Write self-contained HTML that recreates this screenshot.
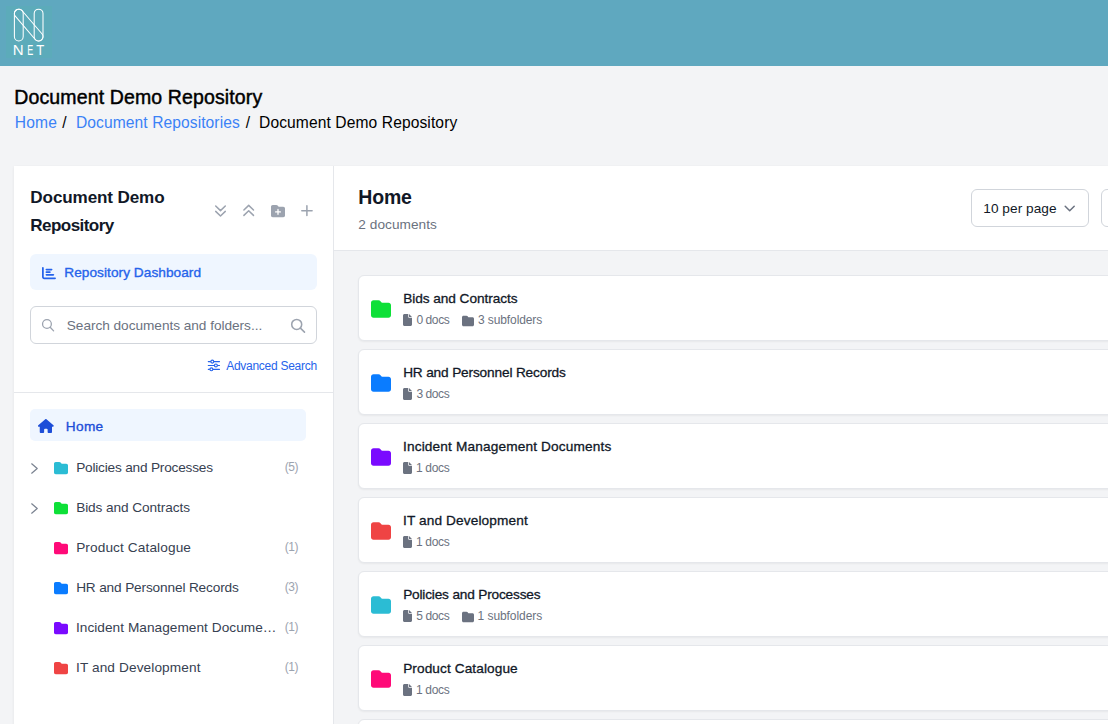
<!DOCTYPE html>
<html lang="en"><head><meta charset="utf-8"><title>Document Demo Repository</title>
<style>
html,body{margin:0;padding:0}
body{width:1108px;height:724px;overflow:hidden;background:#f3f4f6;position:relative;font-family:"Liberation Sans",sans-serif;color:#111827}
.t{position:absolute;white-space:nowrap;display:block;margin:0;font-weight:400}
.ic{position:absolute;display:block;overflow:visible}
.b{position:absolute;box-sizing:border-box}
.card{position:absolute;box-sizing:border-box;left:358px;width:800px;height:66px;background:#fff;border:1px solid #e5e7eb;border-radius:6px;box-shadow:0 1px 2px rgba(0,0,0,.05)}
</style></head><body>

<header>
<div class="b" style="left:0;top:0;width:1108px;height:66px;background:#5fa8bf"></div>
<div class="b" style="left:6px;top:6px;width:46px;height:52px;background:#5cabba"></div>
<svg class="ic" style="left:6px;top:6px" width="45" height="52" viewBox="6 6 45 52">
<g fill="none" stroke="#fff" stroke-width="1.05">
<rect x="14.4" y="9.2" width="8.8" height="31.8" rx="4.4"/>
<rect x="34.2" y="9.2" width="8.8" height="31.8" rx="4.4"/>
<rect x="24.3" y="5.52" width="8.8" height="39.15" rx="4.4" transform="rotate(-40.7 28.7 25.1)"/>
</g>
<g font-family="Liberation Sans, sans-serif" font-size="14.1" fill="#fff" lengthAdjust="spacingAndGlyphs">
<text x="12.77" y="54.6" textLength="10.86" lengthAdjust="spacingAndGlyphs">N</text>
<text x="27.26" y="54.6" textLength="6.03" lengthAdjust="spacingAndGlyphs">E</text>
<text x="36.31" y="54.6" textLength="7.99" lengthAdjust="spacingAndGlyphs">T</text>
</g>
</svg>
</header>
<h1 class="t" id="h1" style="left:14.30px;top:86px;font-size:19.5px;line-height:22px;color:#000;letter-spacing:0.13px;-webkit-text-stroke:0.45px #000;">Document Demo Repository</h1>
<nav aria-label="Breadcrumb">
<span class="t" id="bc1" style="left:14.72px;top:114px;font-size:15.6px;line-height:17px;color:#3b82f6;letter-spacing:0.188px;">Home</span>
<span class="t" id="bc2" style="left:62.28px;top:114px;font-size:15.6px;line-height:17px;color:#000;">/</span>
<span class="t" id="bc3" style="left:76.02px;top:114px;font-size:15.6px;line-height:17px;color:#3b82f6;letter-spacing:0.083px;">Document Repositories</span>
<span class="t" id="bc4" style="left:245.73px;top:114px;font-size:15.6px;line-height:17px;color:#000;">/</span>
<span class="t" id="bc5" style="left:259.02px;top:114px;font-size:15.6px;line-height:17px;color:#000;letter-spacing:0.102px;">Document Demo Repository</span>
</nav>
<!-- main panel -->
<div class="b" style="left:14px;top:166px;width:1100px;height:600px;background:#fff;box-shadow:0 1px 3px rgba(0,0,0,.07)"></div>
<div class="b" style="left:333px;top:166px;width:1px;height:600px;background:#e5e7eb"></div>
<div class="b" style="left:334px;top:250px;width:800px;height:500px;background:#f3f4f6;border-top:1px solid #e5e7eb"></div>
<aside>
<span class="t" id="st1" style="left:30.36px;top:188px;font-size:17.1px;line-height:19px;color:#111827;font-weight:700;letter-spacing:-0.131px;">Document Demo</span>
<span class="t" id="st2" style="left:30.36px;top:216px;font-size:17.1px;line-height:19px;color:#111827;font-weight:700;letter-spacing:-0.596px;">Repository</span>
<svg class="ic" style="left:210px;top:200px" width="110" height="22" viewBox="210 200 110 22">
<g fill="none" stroke="#9ca3af" stroke-width="1.5" stroke-linecap="round" stroke-linejoin="round">
<path d="M215.7 206 L220.5 210.6 L225.3 206 M215.7 211.4 L220.5 216 L225.3 211.4"/>
<path d="M243.9 210 L248.7 205.4 L253.5 210 M243.9 215.4 L248.7 210.8 L253.5 215.4"/>
<path d="M301.8 210.75 H312.1 M306.9 205.8 V215.6"/>
</g></svg>
<svg class="ic" style="left:270.9px;top:203.5px" width="14" height="14" viewBox="0 0 512 512"><path fill="#9ca3af" d="M512 416c0 35.3-28.7 64-64 64H64c-35.3 0-64-28.7-64-64V96C0 60.7 28.7 32 64 32H192c20.1 0 39.1 9.5 51.2 25.6l19.2 25.6c6 8.1 15.5 12.8 25.6 12.8H448c35.3 0 64 28.7 64 64V416zM232 376c0 13.3 10.7 24 24 24s24-10.7 24-24V312h64c13.3 0 24-10.7 24-24s-10.7-24-24-24H280V200c0-13.3-10.7-24-24-24s-24 10.7-24 24v64H168c-13.3 0-24 10.7-24 24s10.7 24 24 24h64v64z"/></svg>
<div class="b" style="left:30px;top:254px;width:287px;height:36px;background:#eff6ff;border-radius:6px"></div>
<svg class="ic" style="left:41.8px;top:265.9px" width="14" height="14" viewBox="0 0 512 512"><path fill="#2563eb" d="M32 32c17.7 0 32 14.3 32 32V400c0 8.8 7.2 16 16 16H480c17.7 0 32 14.3 32 32s-14.3 32-32 32H80c-44.2 0-80-35.8-80-80V64C0 46.3 14.3 32 32 32zm96 96c0-17.7 14.3-32 32-32l192 0c17.7 0 32 14.3 32 32s-14.3 32-32 32l-192 0c-17.7 0-32-14.3-32-32zm32 64H288c17.7 0 32 14.3 32 32s-14.3 32-32 32H160c-17.7 0-32-14.3-32-32s14.3-32 32-32zm0 96H416c17.7 0 32 14.3 32 32s-14.3 32-32 32H160c-17.7 0-32-14.3-32-32s14.3-32 32-32z"/></svg>
<span class="t" id="rd" style="left:64.28px;top:265px;font-size:13.65px;line-height:15px;color:#2563eb;letter-spacing:0.056px;-webkit-text-stroke:0.35px #2563eb;">Repository Dashboard</span>
<div class="b" style="left:30px;top:306px;width:287px;height:38px;background:#fff;border:1px solid #d1d5db;border-radius:6px"></div>
<svg class="ic" style="left:40px;top:317px" width="16" height="16" viewBox="40 317 16 16">
<g fill="none" stroke="#9ca3af" stroke-width="1.3" stroke-linecap="round"><circle cx="46.95" cy="324.05" r="4.4"/><path d="M50.2 327.3 L53.6 330.9"/></g></svg>
<svg class="ic" style="left:289px;top:316px" width="18" height="18" viewBox="289 316 18 18">
<g fill="none" stroke="#9ca3af" stroke-width="1.55" stroke-linecap="round"><circle cx="296.7" cy="324.4" r="5"/><path d="M300.4 328.1 L304.5 332.1"/></g></svg>
<span class="t" id="ph" style="left:66.78px;top:318px;font-size:13.65px;line-height:15px;color:#6b7280;letter-spacing:-0.032px;">Search documents and folders...</span>
<svg class="ic" style="left:206px;top:358px" width="16" height="16" viewBox="206 358 16 16">
<g fill="none" stroke="#2563eb" stroke-width="1.15" stroke-linecap="round">
<path d="M208.3 361.6 H219.5 M208.3 365.45 H219.5 M208.3 369.3 H219.5"/>
<circle cx="212.3" cy="361.6" r="1.45" fill="#fff"/><circle cx="215.9" cy="365.45" r="1.45" fill="#fff"/><circle cx="211.4" cy="369.3" r="1.45" fill="#fff"/>
</g></svg>
<span class="t" id="as" style="left:226.23px;top:359px;font-size:12.0px;line-height:14px;color:#2563eb;letter-spacing:-0.277px;">Advanced Search</span>
<div class="b" style="left:14px;top:392px;width:319px;height:1px;background:#e5e7eb"></div>
<!-- folder tree -->
<div class="b" style="left:30px;top:409px;width:276px;height:32px;background:#eff6ff;border-radius:5px"></div>
<svg class="ic" style="left:37.8px;top:418.7px" width="15.75" height="14" viewBox="0 0 576 512"><path fill="#1d4ed8" d="M575.8 255.5c0 18-15 32.1-32 32.1h-32l.7 160.2c0 2.7-.2 5.4-.5 8.1V472c0 22.1-17.9 40-40 40H456c-1.1 0-2.2 0-3.3-.1c-1.4 .1-2.8 .1-4.2 .1H416 392c-22.1 0-40-17.9-40-40V448 384c0-17.7-14.3-32-32-32H256c-17.7 0-32 14.3-32 32v64 24c0 22.1-17.9 40-40 40H160 128.1c-1.5 0-3-.1-4.5-.2c-1.2 .1-2.4 .2-3.6 .2H104c-22.1 0-40-17.9-40-40V360c0-.9 0-1.9 .1-2.8V287.6H32c-18 0-32-14-32-32.1c0-9 3-17 10-24L266.4 8c7-7 15-8 22-8s15 2 21 7L564.8 231.5c8 7 12 15 11 24z"/></svg>
<span class="t" id="th" style="left:65.83px;top:419px;font-size:13.65px;line-height:15px;color:#1d4ed8;letter-spacing:0.329px;-webkit-text-stroke:0.35px #1d4ed8;">Home</span>
<svg class="ic" style="left:28px;top:461.0px" width="14" height="14" viewBox="0 0 14 14"><path d="M3.7 2.8 L9.2 7.5 L3.7 12.2" fill="none" stroke="#7b8391" stroke-width="1.25" stroke-linecap="round" stroke-linejoin="round"/></svg>
<svg class="ic" style="left:53.7px;top:460.5px" width="14" height="14" viewBox="0 0 512 512"><path fill="#2bbcd4" d="M64 480H448c35.3 0 64-28.7 64-64V160c0-35.3-28.7-64-64-64H288c-10.1 0-19.6-4.7-25.6-12.8L243.2 57.6C231.1 41.5 212.1 32 192 32H64C28.7 32 0 60.7 0 96V416c0 35.3 28.7 64 64 64z"/></svg>
<span class="t" id="tr0" style="left:76.13px;top:460px;font-size:13.65px;line-height:15px;color:#374151;letter-spacing:-0.194px;">Policies and Processes</span>
<span class="t" id="tc0" style="left:284.66px;top:460px;font-size:12.0px;line-height:14px;color:#9ca3af;letter-spacing:-0.392px;">(5)</span>
<svg class="ic" style="left:28px;top:501.0px" width="14" height="14" viewBox="0 0 14 14"><path d="M3.7 2.8 L9.2 7.5 L3.7 12.2" fill="none" stroke="#7b8391" stroke-width="1.25" stroke-linecap="round" stroke-linejoin="round"/></svg>
<svg class="ic" style="left:53.7px;top:500.5px" width="14" height="14" viewBox="0 0 512 512"><path fill="#0ee038" d="M64 480H448c35.3 0 64-28.7 64-64V160c0-35.3-28.7-64-64-64H288c-10.1 0-19.6-4.7-25.6-12.8L243.2 57.6C231.1 41.5 212.1 32 192 32H64C28.7 32 0 60.7 0 96V416c0 35.3 28.7 64 64 64z"/></svg>
<span class="t" id="tr1" style="left:76.13px;top:500px;font-size:13.65px;line-height:15px;color:#374151;letter-spacing:-0.076px;">Bids and Contracts</span>
<svg class="ic" style="left:53.7px;top:540.5px" width="14" height="14" viewBox="0 0 512 512"><path fill="#ff0a78" d="M64 480H448c35.3 0 64-28.7 64-64V160c0-35.3-28.7-64-64-64H288c-10.1 0-19.6-4.7-25.6-12.8L243.2 57.6C231.1 41.5 212.1 32 192 32H64C28.7 32 0 60.7 0 96V416c0 35.3 28.7 64 64 64z"/></svg>
<span class="t" id="tr2" style="left:76.13px;top:540px;font-size:13.65px;line-height:15px;color:#374151;letter-spacing:0.114px;">Product Catalogue</span>
<span class="t" id="tc2" style="left:284.66px;top:540px;font-size:12.0px;line-height:14px;color:#9ca3af;letter-spacing:-0.392px;">(1)</span>
<svg class="ic" style="left:53.7px;top:580.5px" width="14" height="14" viewBox="0 0 512 512"><path fill="#0a7cff" d="M64 480H448c35.3 0 64-28.7 64-64V160c0-35.3-28.7-64-64-64H288c-10.1 0-19.6-4.7-25.6-12.8L243.2 57.6C231.1 41.5 212.1 32 192 32H64C28.7 32 0 60.7 0 96V416c0 35.3 28.7 64 64 64z"/></svg>
<span class="t" id="tr3" style="left:76.13px;top:580px;font-size:13.65px;line-height:15px;color:#374151;letter-spacing:-0.145px;">HR and Personnel Records</span>
<span class="t" id="tc3" style="left:284.66px;top:580px;font-size:12.0px;line-height:14px;color:#9ca3af;letter-spacing:-0.392px;">(3)</span>
<svg class="ic" style="left:53.7px;top:620.5px" width="14" height="14" viewBox="0 0 512 512"><path fill="#7a0aff" d="M64 480H448c35.3 0 64-28.7 64-64V160c0-35.3-28.7-64-64-64H288c-10.1 0-19.6-4.7-25.6-12.8L243.2 57.6C231.1 41.5 212.1 32 192 32H64C28.7 32 0 60.7 0 96V416c0 35.3 28.7 64 64 64z"/></svg>
<span class="t" id="tr4" style="left:75.99px;top:620px;font-size:13.65px;line-height:15px;color:#374151;letter-spacing:0.04px;">Incident Management Docume…</span>
<span class="t" id="tc4" style="left:284.66px;top:620px;font-size:12.0px;line-height:14px;color:#9ca3af;letter-spacing:-0.392px;">(1)</span>
<svg class="ic" style="left:53.7px;top:660.5px" width="14" height="14" viewBox="0 0 512 512"><path fill="#ef4444" d="M64 480H448c35.3 0 64-28.7 64-64V160c0-35.3-28.7-64-64-64H288c-10.1 0-19.6-4.7-25.6-12.8L243.2 57.6C231.1 41.5 212.1 32 192 32H64C28.7 32 0 60.7 0 96V416c0 35.3 28.7 64 64 64z"/></svg>
<span class="t" id="tr5" style="left:75.99px;top:660px;font-size:13.65px;line-height:15px;color:#374151;letter-spacing:0.11px;">IT and Development</span>
<span class="t" id="tc5" style="left:284.66px;top:660px;font-size:12.0px;line-height:14px;color:#9ca3af;letter-spacing:-0.392px;">(1)</span>
</aside>
<main>
<span class="t" id="rh" style="left:358.20px;top:186px;font-size:19.5px;line-height:22px;color:#111827;font-weight:700;letter-spacing:-0.139px;">Home</span>
<span class="t" id="rs" style="left:358.31px;top:217px;font-size:13.65px;line-height:15px;color:#6b7280;letter-spacing:0.047px;">2 documents</span>
<div class="b" style="left:971px;top:189px;width:118px;height:38px;background:#fff;border:1px solid #d1d5db;border-radius:6px"></div>
<span class="t" id="sel" style="left:983.26px;top:201px;font-size:13.65px;line-height:15px;color:#111827;letter-spacing:0.053px;">10 per page</span>
<svg class="ic" style="left:1062px;top:201px" width="16" height="16" viewBox="1062 201 16 16"><path d="M1065.2 206.2 L1069.7 210.7 L1074.2 206.2" fill="none" stroke="#6b7280" stroke-width="1.5" stroke-linecap="round" stroke-linejoin="round"/></svg>
<div class="b" style="left:1101px;top:189px;width:60px;height:38px;background:#fff;border:1px solid #d1d5db;border-radius:6px"></div>
<!-- folder cards -->
<div class="card" style="top:275px"></div>
<svg class="ic" style="left:371px;top:298.5px" width="20" height="20" viewBox="0 0 512 512"><path fill="#0ee038" d="M64 480H448c35.3 0 64-28.7 64-64V160c0-35.3-28.7-64-64-64H288c-10.1 0-19.6-4.7-25.6-12.8L243.2 57.6C231.1 41.5 212.1 32 192 32H64C28.7 32 0 60.7 0 96V416c0 35.3 28.7 64 64 64z"/></svg>
<span class="t" id="ct0" style="left:403.13px;top:291px;font-size:13.65px;line-height:15px;color:#111827;letter-spacing:-0.046px;-webkit-text-stroke:0.3px #111827;">Bids and Contracts</span>
<svg class="ic" style="left:403px;top:314.3px" width="9" height="12" viewBox="0 0 384 512"><path fill="#6b7280" d="M0 64C0 28.7 28.7 0 64 0H224V128c0 17.7 14.3 32 32 32H384V448c0 35.3-28.7 64-64 64H64c-35.3 0-64-28.7-64-64V64zm384 64H256V0L384 128z"/></svg>
<span class="t" id="cd0" style="left:416.38px;top:313px;font-size:12.0px;line-height:14px;color:#6b7280;letter-spacing:-0.401px;">0 docs</span>
<svg class="ic" style="left:462px;top:314.5px" width="12" height="12" viewBox="0 0 512 512"><path fill="#6b7280" d="M64 480H448c35.3 0 64-28.7 64-64V160c0-35.3-28.7-64-64-64H288c-10.1 0-19.6-4.7-25.6-12.8L243.2 57.6C231.1 41.5 212.1 32 192 32H64C28.7 32 0 60.7 0 96V416c0 35.3 28.7 64 64 64z"/></svg>
<span class="t" id="cs0" style="left:478.04px;top:313px;font-size:12.0px;line-height:14px;color:#6b7280;letter-spacing:-0.108px;">3 subfolders</span>
<div class="card" style="top:349px"></div>
<svg class="ic" style="left:371px;top:372.5px" width="20" height="20" viewBox="0 0 512 512"><path fill="#0a7cff" d="M64 480H448c35.3 0 64-28.7 64-64V160c0-35.3-28.7-64-64-64H288c-10.1 0-19.6-4.7-25.6-12.8L243.2 57.6C231.1 41.5 212.1 32 192 32H64C28.7 32 0 60.7 0 96V416c0 35.3 28.7 64 64 64z"/></svg>
<span class="t" id="ct1" style="left:403.13px;top:365px;font-size:13.65px;line-height:15px;color:#111827;letter-spacing:-0.145px;-webkit-text-stroke:0.3px #111827;">HR and Personnel Records</span>
<svg class="ic" style="left:403px;top:388.3px" width="9" height="12" viewBox="0 0 384 512"><path fill="#6b7280" d="M0 64C0 28.7 28.7 0 64 0H224V128c0 17.7 14.3 32 32 32H384V448c0 35.3-28.7 64-64 64H64c-35.3 0-64-28.7-64-64V64zm384 64H256V0L384 128z"/></svg>
<span class="t" id="cd1" style="left:416.39px;top:387px;font-size:12.0px;line-height:14px;color:#6b7280;letter-spacing:-0.404px;">3 docs</span>
<div class="card" style="top:423px"></div>
<svg class="ic" style="left:371px;top:446.5px" width="20" height="20" viewBox="0 0 512 512"><path fill="#7a0aff" d="M64 480H448c35.3 0 64-28.7 64-64V160c0-35.3-28.7-64-64-64H288c-10.1 0-19.6-4.7-25.6-12.8L243.2 57.6C231.1 41.5 212.1 32 192 32H64C28.7 32 0 60.7 0 96V416c0 35.3 28.7 64 64 64z"/></svg>
<span class="t" id="ct2" style="left:402.99px;top:439px;font-size:13.65px;line-height:15px;color:#111827;letter-spacing:0.157px;-webkit-text-stroke:0.3px #111827;">Incident Management Documents</span>
<svg class="ic" style="left:403px;top:462.3px" width="9" height="12" viewBox="0 0 384 512"><path fill="#6b7280" d="M0 64C0 28.7 28.7 0 64 0H224V128c0 17.7 14.3 32 32 32H384V448c0 35.3-28.7 64-64 64H64c-35.3 0-64-28.7-64-64V64zm384 64H256V0L384 128z"/></svg>
<span class="t" id="cd2" style="left:415.94px;top:461px;font-size:12.0px;line-height:14px;color:#6b7280;letter-spacing:-0.312px;">1 docs</span>
<div class="card" style="top:497px"></div>
<svg class="ic" style="left:371px;top:520.5px" width="20" height="20" viewBox="0 0 512 512"><path fill="#ef4444" d="M64 480H448c35.3 0 64-28.7 64-64V160c0-35.3-28.7-64-64-64H288c-10.1 0-19.6-4.7-25.6-12.8L243.2 57.6C231.1 41.5 212.1 32 192 32H64C28.7 32 0 60.7 0 96V416c0 35.3 28.7 64 64 64z"/></svg>
<span class="t" id="ct3" style="left:402.99px;top:513px;font-size:13.65px;line-height:15px;color:#111827;letter-spacing:0.124px;-webkit-text-stroke:0.3px #111827;">IT and Development</span>
<svg class="ic" style="left:403px;top:536.3px" width="9" height="12" viewBox="0 0 384 512"><path fill="#6b7280" d="M0 64C0 28.7 28.7 0 64 0H224V128c0 17.7 14.3 32 32 32H384V448c0 35.3-28.7 64-64 64H64c-35.3 0-64-28.7-64-64V64zm384 64H256V0L384 128z"/></svg>
<span class="t" id="cd3" style="left:415.94px;top:535px;font-size:12.0px;line-height:14px;color:#6b7280;letter-spacing:-0.312px;">1 docs</span>
<div class="card" style="top:571px"></div>
<svg class="ic" style="left:371px;top:594.5px" width="20" height="20" viewBox="0 0 512 512"><path fill="#2bbcd4" d="M64 480H448c35.3 0 64-28.7 64-64V160c0-35.3-28.7-64-64-64H288c-10.1 0-19.6-4.7-25.6-12.8L243.2 57.6C231.1 41.5 212.1 32 192 32H64C28.7 32 0 60.7 0 96V416c0 35.3 28.7 64 64 64z"/></svg>
<span class="t" id="ct4" style="left:403.13px;top:587px;font-size:13.65px;line-height:15px;color:#111827;letter-spacing:-0.17px;-webkit-text-stroke:0.3px #111827;">Policies and Processes</span>
<svg class="ic" style="left:403px;top:610.3px" width="9" height="12" viewBox="0 0 384 512"><path fill="#6b7280" d="M0 64C0 28.7 28.7 0 64 0H224V128c0 17.7 14.3 32 32 32H384V448c0 35.3-28.7 64-64 64H64c-35.3 0-64-28.7-64-64V64zm384 64H256V0L384 128z"/></svg>
<span class="t" id="cd4" style="left:416.37px;top:609px;font-size:12.0px;line-height:14px;color:#6b7280;letter-spacing:-0.399px;">5 docs</span>
<svg class="ic" style="left:462px;top:610.5px" width="12" height="12" viewBox="0 0 512 512"><path fill="#6b7280" d="M64 480H448c35.3 0 64-28.7 64-64V160c0-35.3-28.7-64-64-64H288c-10.1 0-19.6-4.7-25.6-12.8L243.2 57.6C231.1 41.5 212.1 32 192 32H64C28.7 32 0 60.7 0 96V416c0 35.3 28.7 64 64 64z"/></svg>
<span class="t" id="cs4" style="left:477.59px;top:609px;font-size:12.0px;line-height:14px;color:#6b7280;letter-spacing:-0.066px;">1 subfolders</span>
<div class="card" style="top:645px"></div>
<svg class="ic" style="left:371px;top:668.5px" width="20" height="20" viewBox="0 0 512 512"><path fill="#ff0a78" d="M64 480H448c35.3 0 64-28.7 64-64V160c0-35.3-28.7-64-64-64H288c-10.1 0-19.6-4.7-25.6-12.8L243.2 57.6C231.1 41.5 212.1 32 192 32H64C28.7 32 0 60.7 0 96V416c0 35.3 28.7 64 64 64z"/></svg>
<span class="t" id="ct5" style="left:403.13px;top:661px;font-size:13.65px;line-height:15px;color:#111827;letter-spacing:0.099px;-webkit-text-stroke:0.3px #111827;">Product Catalogue</span>
<svg class="ic" style="left:403px;top:684.3px" width="9" height="12" viewBox="0 0 384 512"><path fill="#6b7280" d="M0 64C0 28.7 28.7 0 64 0H224V128c0 17.7 14.3 32 32 32H384V448c0 35.3-28.7 64-64 64H64c-35.3 0-64-28.7-64-64V64zm384 64H256V0L384 128z"/></svg>
<span class="t" id="cd5" style="left:415.94px;top:683px;font-size:12.0px;line-height:14px;color:#6b7280;letter-spacing:-0.312px;">1 docs</span>
<div class="card" style="top:719px"></div>
</main>
</body></html>
